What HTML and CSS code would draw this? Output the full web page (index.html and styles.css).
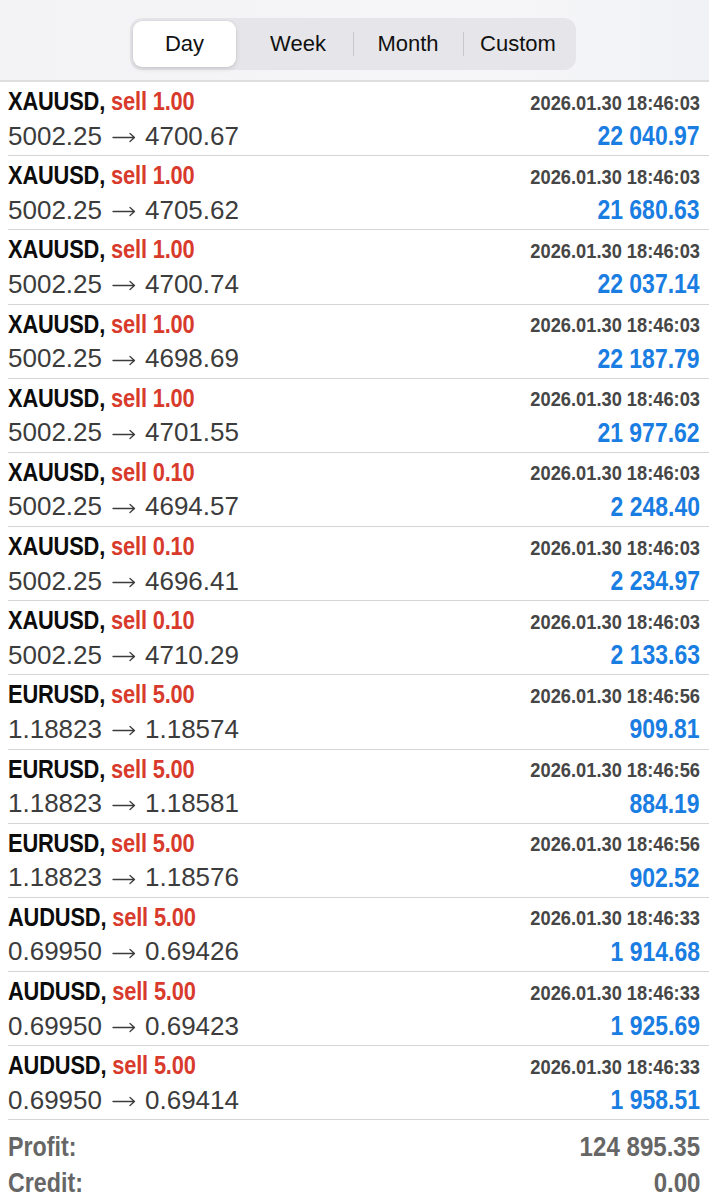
FILE: index.html
```html
<!DOCTYPE html>
<html>
<head>
<meta charset="utf-8">
<link rel="stylesheet" href="styles.css">
</head>
<body>
<svg width="0" height="0" class="defs">
  <defs>
    <symbol id="arrow" viewBox="0 0 24 14">
      <path d="M1 7.5 H22.5 M18 3.5 L22.5 7.5 L18 11.5" fill="none" stroke="#3c3c3c" stroke-width="1.3" stroke-linecap="round" stroke-linejoin="round"/>
    </symbol>
  </defs>
</svg>
<div class="header">
  <div class="seg">
    <div class="seg-item active">Day</div>
    <div class="seg-item">Week</div>
    <div class="seg-item div-left">Month</div>
    <div class="seg-item div-left">Custom</div>
  </div>
</div>
<div class="list">
  <div class="row"><div class="line"><span class="l1"><span class="sym">XAUUSD,</span> <span class="side">sell 1.00</span></span><span class="date">2026.01.30 18:46:03</span></div><div class="line line2"><span class="prices">5002.25<svg class="arr"><use href="#arrow"/></svg>4700.67</span><span class="pl">22 040.97</span></div></div>
  <div class="row"><div class="line"><span class="l1"><span class="sym">XAUUSD,</span> <span class="side">sell 1.00</span></span><span class="date">2026.01.30 18:46:03</span></div><div class="line line2"><span class="prices">5002.25<svg class="arr"><use href="#arrow"/></svg>4705.62</span><span class="pl">21 680.63</span></div></div>
  <div class="row"><div class="line"><span class="l1"><span class="sym">XAUUSD,</span> <span class="side">sell 1.00</span></span><span class="date">2026.01.30 18:46:03</span></div><div class="line line2"><span class="prices">5002.25<svg class="arr"><use href="#arrow"/></svg>4700.74</span><span class="pl">22 037.14</span></div></div>
  <div class="row"><div class="line"><span class="l1"><span class="sym">XAUUSD,</span> <span class="side">sell 1.00</span></span><span class="date">2026.01.30 18:46:03</span></div><div class="line line2"><span class="prices">5002.25<svg class="arr"><use href="#arrow"/></svg>4698.69</span><span class="pl">22 187.79</span></div></div>
  <div class="row"><div class="line"><span class="l1"><span class="sym">XAUUSD,</span> <span class="side">sell 1.00</span></span><span class="date">2026.01.30 18:46:03</span></div><div class="line line2"><span class="prices">5002.25<svg class="arr"><use href="#arrow"/></svg>4701.55</span><span class="pl">21 977.62</span></div></div>
  <div class="row"><div class="line"><span class="l1"><span class="sym">XAUUSD,</span> <span class="side">sell 0.10</span></span><span class="date">2026.01.30 18:46:03</span></div><div class="line line2"><span class="prices">5002.25<svg class="arr"><use href="#arrow"/></svg>4694.57</span><span class="pl">2 248.40</span></div></div>
  <div class="row"><div class="line"><span class="l1"><span class="sym">XAUUSD,</span> <span class="side">sell 0.10</span></span><span class="date">2026.01.30 18:46:03</span></div><div class="line line2"><span class="prices">5002.25<svg class="arr"><use href="#arrow"/></svg>4696.41</span><span class="pl">2 234.97</span></div></div>
  <div class="row"><div class="line"><span class="l1"><span class="sym">XAUUSD,</span> <span class="side">sell 0.10</span></span><span class="date">2026.01.30 18:46:03</span></div><div class="line line2"><span class="prices">5002.25<svg class="arr"><use href="#arrow"/></svg>4710.29</span><span class="pl">2 133.63</span></div></div>
  <div class="row"><div class="line"><span class="l1"><span class="sym">EURUSD,</span> <span class="side">sell 5.00</span></span><span class="date">2026.01.30 18:46:56</span></div><div class="line line2"><span class="prices">1.18823<svg class="arr"><use href="#arrow"/></svg>1.18574</span><span class="pl">909.81</span></div></div>
  <div class="row"><div class="line"><span class="l1"><span class="sym">EURUSD,</span> <span class="side">sell 5.00</span></span><span class="date">2026.01.30 18:46:56</span></div><div class="line line2"><span class="prices">1.18823<svg class="arr"><use href="#arrow"/></svg>1.18581</span><span class="pl">884.19</span></div></div>
  <div class="row"><div class="line"><span class="l1"><span class="sym">EURUSD,</span> <span class="side">sell 5.00</span></span><span class="date">2026.01.30 18:46:56</span></div><div class="line line2"><span class="prices">1.18823<svg class="arr"><use href="#arrow"/></svg>1.18576</span><span class="pl">902.52</span></div></div>
  <div class="row"><div class="line"><span class="l1"><span class="sym">AUDUSD,</span> <span class="side">sell 5.00</span></span><span class="date">2026.01.30 18:46:33</span></div><div class="line line2"><span class="prices">0.69950<svg class="arr"><use href="#arrow"/></svg>0.69426</span><span class="pl">1 914.68</span></div></div>
  <div class="row"><div class="line"><span class="l1"><span class="sym">AUDUSD,</span> <span class="side">sell 5.00</span></span><span class="date">2026.01.30 18:46:33</span></div><div class="line line2"><span class="prices">0.69950<svg class="arr"><use href="#arrow"/></svg>0.69423</span><span class="pl">1 925.69</span></div></div>
  <div class="row"><div class="line"><span class="l1"><span class="sym">AUDUSD,</span> <span class="side">sell 5.00</span></span><span class="date">2026.01.30 18:46:33</span></div><div class="line line2"><span class="prices">0.69950<svg class="arr"><use href="#arrow"/></svg>0.69414</span><span class="pl">1 958.51</span></div></div>
</div>
<div class="summary">
  <div class="sum-row"><span class="sum-l">Profit:</span><span class="sum-r">124 895.35</span></div>
  <div class="sum-row"><span class="sum-l">Credit:</span><span class="sum-r">0.00</span></div>
</div>
</body>
</html>
```
FILE: styles.css
```css
html, body {
  margin: 0;
  padding: 0;
  background: #ffffff;
}
body {
  width: 709px;
  font-family: "Liberation Sans", Arial, sans-serif;
  overflow: hidden;
}
.defs {
  position: absolute;
  width: 0;
  height: 0;
}
.header {
  height: 82px;
  background: linear-gradient(90deg, #f3f3f5, #f6f6f8 70%, #f1f2f6);
  border-bottom: 2px solid #dedee0;
  display: flex;
  justify-content: center;
  padding-top: 18px;
  box-sizing: border-box;
}
.seg {
  width: 446px;
  height: 52px;
  box-sizing: border-box;
  margin-left: -3px;
  padding: 3px;
  background: #e6e6ea;
  border-radius: 12px;
  display: grid;
  grid-template-columns: repeat(4, 1fr);
}
.seg-item {
  display: flex;
  align-items: center;
  justify-content: center;
  font-size: 22px;
  color: #111;
  position: relative;
  border-radius: 9px;
}
.seg-item.active {
  background: #ffffff;
  margin-right: 7px;
  box-shadow: 0 2px 5px rgba(0,0,0,0.12), 0 0 0 0.5px rgba(0,0,0,0.04);
}
.seg-item.div-left::before {
  content: "";
  position: absolute;
  left: 0;
  top: 11px;
  bottom: 11px;
  width: 1px;
  background: #c9c9cd;
}
.list {
  padding-left: 8px;
}
.row {
  height: 74px;
  box-sizing: border-box;
  border-bottom: 1px solid #d4d4d6;
  padding: 3px 9px 0 0;
  display: flex;
  flex-direction: column;
}
.row:nth-child(3n) { height: 74.5px; }
.line {
  height: 33px;
  display: flex;
  justify-content: space-between;
  align-items: center;
  white-space: nowrap;
}
.line2 {
  height: 36px;
}
.l1 {
  display: inline-block;
  font-weight: bold;
  font-size: 26px;
  transform: scaleX(0.84);
  transform-origin: left center;
  letter-spacing: -0.2px;
}
.sym { color: #0c0c0c; }
.side { color: #d83a2c; }
.date {
  display: inline-block;
  font-weight: bold;
  font-size: 21px;
  color: #464646;
  transform: scaleX(0.87);
  transform-origin: right center;
  padding-top: 2px;
}
.prices {
  display: inline-flex;
  align-items: center;
  font-size: 26px;
  color: #3c3c3c;
}
.arr {
  width: 24px;
  height: 14px;
  margin: 2px 9px 0 10px;
}
.pl {
  display: inline-block;
  font-weight: bold;
  font-size: 28px;
  color: #1a7de2;
  transform: scaleX(0.82);
  transform-origin: right center;
}
.summary {
  padding: 9px 9px 0 8px;
}
.sum-row {
  display: flex;
  justify-content: space-between;
  align-items: center;
  height: 36px;
  white-space: nowrap;
}
.sum-l, .sum-r {
  display: inline-block;
  font-weight: bold;
  font-size: 28px;
  color: #666666;
  transform: scaleX(0.83);
}
.sum-l { transform-origin: left center; }
.sum-r { transform-origin: right center; transform: scaleX(0.86); }
```
